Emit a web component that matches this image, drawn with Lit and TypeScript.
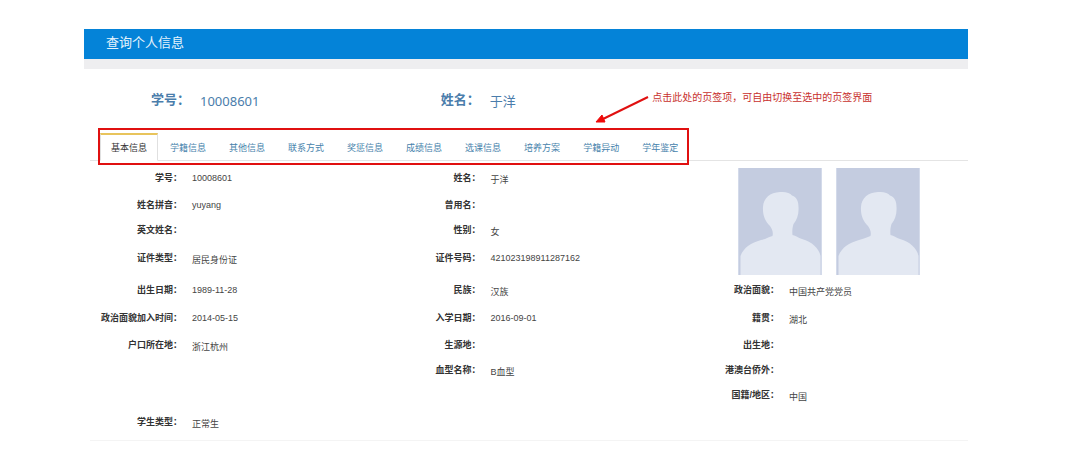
import { LitElement, html, css, svg } from "lit";
import { customElement, property, state } from "lit/decorators.js";

interface Field {
  label: string;
  value: string;
  row: number;
  col: number;
}

const TABS = [
  "基本信息", "学籍信息", "其他信息", "联系方式", "奖惩信息",
  "成绩信息", "选课信息", "培养方案", "学籍异动", "学年鉴定",
];

const FIELDS: Field[] = [
  { label: "学号", value: "10008601", row: 1, col: 1 },
  { label: "姓名", value: "于洋", row: 1, col: 2 },
  { label: "姓名拼音", value: "yuyang", row: 2, col: 1 },
  { label: "曾用名", value: "", row: 2, col: 2 },
  { label: "英文姓名", value: "", row: 3, col: 1 },
  { label: "性别", value: "女", row: 3, col: 2 },
  { label: "证件类型", value: "居民身份证", row: 4, col: 1 },
  { label: "证件号码", value: "421023198911287162", row: 4, col: 2 },
  { label: "出生日期", value: "1989-11-28", row: 5, col: 1 },
  { label: "民族", value: "汉族", row: 5, col: 2 },
  { label: "政治面貌", value: "中国共产党党员", row: 5, col: 3 },
  { label: "政治面貌加入时间", value: "2014-05-15", row: 6, col: 1 },
  { label: "入学日期", value: "2016-09-01", row: 6, col: 2 },
  { label: "籍贯", value: "湖北", row: 6, col: 3 },
  { label: "户口所在地", value: "浙江杭州", row: 7, col: 1 },
  { label: "生源地", value: "", row: 7, col: 2 },
  { label: "出生地", value: "", row: 7, col: 3 },
  { label: "血型名称", value: "B血型", row: 8, col: 2 },
  { label: "港澳台侨外", value: "", row: 8, col: 3 },
  { label: "国籍/地区", value: "中国", row: 9, col: 3 },
  { label: "学生类型", value: "正常生", row: 10, col: 1 },
];

@customElement("info-field")
class InfoField extends LitElement {
  @property() label = "";
  @property() value = "";

  static styles = css`
    :host { display: block; }
    .field { display: flex; gap: 10px; margin: 0; }
    .label {
      flex: none;
      width: 92px;
      text-align: right;
      font-weight: 700;
      line-height: 14px;
      white-space: nowrap;
      font-family: "Liberation Sans", "Noto Sans CJK SC", sans-serif;
    }
    .value { margin: 0; padding-top: 2px; color: #444; line-height: normal; }
    :host([large]) .field { color: #4a7dab; font-size: 13px; }
    :host([large]) .label { width: 100px; line-height: 20px; }
    :host([large]) .value {
      padding-top: 0;
      color: inherit;
      line-height: 22px;
      font-family: "Noto Sans", "Noto Sans CJK SC", sans-serif;
    }
  `;

  render() {
    return html`<dl class="field">
      <dt class="label" lang="zh-CN">${this.label}：</dt>
      <dd class="value">${this.value}</dd>
    </dl>`;
  }
}

@customElement("photo-placeholder")
class PhotoPlaceholder extends LitElement {
  static styles = css`
    :host { display: block; width: 84px; height: 107px; }
    .photo { display: block; width: 100%; height: 100%; }
  `;

  render() {
    return html`<svg class="photo" viewBox="0 0 84 107" role="img" aria-label="照片">
      ${svg`
        <rect width="84" height="107" fill="#c4cce0"/>
        <path fill="#e3e8f2" d="M42 24C48 23.500 52 25 54 27.500C59 29 60.500 34 60.500 39C61 46 59 52 55.500 56C54.500 59 54 63 54.500 67C58 67.500 60 70 64 71C74 74 81 80 82.500 88V107H2.500V88C6 79 13 75 23 72C28 71 31 69 34.500 68C35.500 64 34 61 32 58C27 53 24.500 47 25 39C25.500 30 32 24.500 42 24Z"/>
        <path d="M.5 0V107M83.500 0V107" stroke="#d3daea"/>
      `}
    </svg>`;
  }
}

@customElement("app-root")
class AppRoot extends LitElement {
  @state() private active = 0;

  static styles = css`
    :host {
      display: block;
      padding: 29px 103px 0 84px;
      color: #333;
      background: #fff;
      font-family: "Liberation Sans", "Noto Sans CJK SC", sans-serif;
      font-size: 9px;
    }
    .bar {
      background: #0483d8;
      padding: 3px 22px 5px;
      border-bottom: 10px solid #eeeef0;
    }
    .title {
      margin: 0;
      color: #e4f3fc;
      font-size: 13px;
      font-weight: 400;
      line-height: 22px;
    }
    .card {
      margin: 11px 0 0 6px;
      padding-bottom: 10px;
      border-bottom: 1px solid #f4f4f4;
    }
    .summary {
      display: grid;
      grid-template-columns: 33% 33% 1fr;
      padding: 10px 0 21px;
    }
    .nav { border-bottom: 1px solid #e4e4e4; padding-left: 10px; }
    .tabs {
      position: relative;
      display: inline-flex;
      gap: 1px;
      vertical-align: top;
      margin-bottom: -1px;
    }
    .tabs::after {
      content: "";
      position: absolute;
      inset: -5px 0 -4px -2px;
      border: 2px solid #e01010;
      pointer-events: none;
    }
    .tab {
      font: inherit;
      line-height: 14px;
      padding: 6px 10px 5px;
      border: 1px solid transparent;
      border-top-width: 2px;
      background: none;
      color: #4682ab;
      white-space: nowrap;
      cursor: pointer;
    }
    .tab.active {
      color: #333;
      background: #fff;
      border-color: #e8c45c #e0e0e0 #fff;
    }
    .note {
      position: absolute;
      right: 0;
      bottom: 100%;
      width: 94px;
      height: 43px;
    }
    .arrow { display: block; width: 94px; height: 43px; }
    .note-text {
      position: absolute;
      left: 57px;
      top: 0;
      margin: 0;
      color: #c8312d;
      font-size: 10px;
      line-height: 16px;
      white-space: nowrap;
    }
    .fields {
      display: grid;
      grid-template-columns: 34% 34% 1fr;
      grid-template-rows: 27px 25px 28px 32px 28px 27px 25px 25px 27px auto;
      padding-top: 10px;
    }
    .photos {
      grid-area: 1 / 3 / 5 / 4;
      display: flex;
      gap: 14px;
      margin-top: -3px;
      padding-left: 51px;
    }
  `;

  render() {
    return html`
      <header class="bar"><h1 class="title">查询个人信息</h1></header>
      <main class="card">
        <section class="summary">
          <info-field large label="学号" value="10008601"></info-field>
          <info-field large label="姓名" value="于洋"></info-field>
        </section>
        <div class="nav">
          <div class="tabs" role="tablist">
            ${TABS.map((name, i) => html`<button
              type="button"
              role="tab"
              class="tab ${i === this.active ? "active" : ""}"
              aria-selected=${i === this.active ? "true" : "false"}
              @click=${() => { this.active = i; }}
            >${name}</button>`)}
            <div class="note">
              <svg class="arrow" viewBox="0 0 94 43" aria-hidden="true">
                <path d="M53 7L8 29" stroke="#e01010" stroke-width="2"/>
                <path d="M1 32L7 25L10 32Z" fill="#f00808" stroke="#f00808"/>
              </svg>
              <p class="note-text">点击此处的页签项，可自由切换至选中的页签界面</p>
            </div>
          </div>
        </div>
        <section class="fields">
          ${FIELDS.map((f) => html`<info-field
            label=${f.label}
            value=${f.value}
            style="grid-area: ${f.row} / ${f.col}"
          ></info-field>`)}
          <div class="photos">
            <photo-placeholder></photo-placeholder>
            <photo-placeholder></photo-placeholder>
          </div>
        </section>
      </main>
    `;
  }
}
